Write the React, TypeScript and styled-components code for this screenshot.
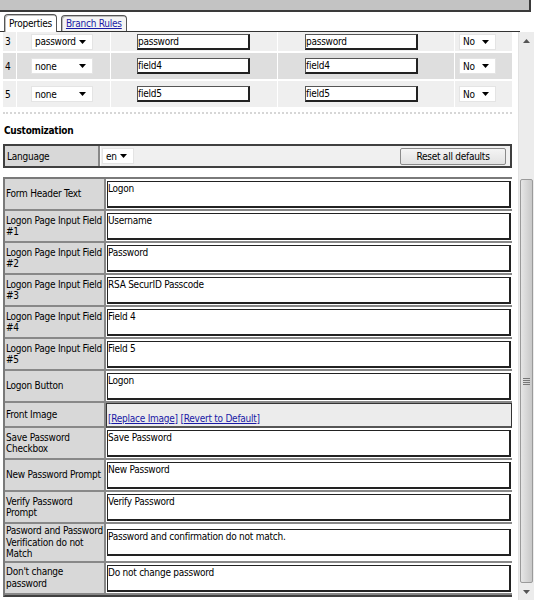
import styled, { createGlobalStyle } from 'styled-components'

const GlobalStyle = createGlobalStyle`
  html, body {
    margin: 0;
    padding: 0;
    background: #ffffff;
  }
  body {
    font-family: "DejaVu Sans Condensed", "DejaVu Sans", sans-serif;
    font-stretch: condensed;
    font-size: 10px;
    letter-spacing: -0.25px;
    color: #000;
    width: 534px;
    height: 600px;
    overflow: hidden;
  }
`

type FieldRow = { num: number; type: string; name: string; label: string; bg: 'light' | 'dark'; clipped?: boolean }

const fieldRows: FieldRow[] = [
  { num: 3, type: 'password', name: 'password', label: 'password', bg: 'light', clipped: true },
  { num: 4, type: 'none', name: 'field4', label: 'field4', bg: 'dark' },
  { num: 5, type: 'none', name: 'field5', label: 'field5', bg: 'light' },
]

type CustomRow = { label: string; value?: string; image?: boolean }

// line breaks follow the narrow label column of the original form
const customRows: CustomRow[] = [
  { label: 'Form Header Text', value: 'Logon' },
  { label: 'Logon Page Input Field\n#1', value: 'Username' },
  { label: 'Logon Page Input Field\n#2', value: 'Password' },
  { label: 'Logon Page Input Field\n#3', value: 'RSA SecurID Passcode' },
  { label: 'Logon Page Input Field\n#4', value: 'Field 4' },
  { label: 'Logon Page Input Field\n#5', value: 'Field 5' },
  { label: 'Logon Button', value: 'Logon' },
  { label: 'Front Image', image: true },
  { label: 'Save Password\nCheckbox', value: 'Save Password' },
  { label: 'New Password Prompt', value: 'New Password' },
  { label: 'Verify Password\nPrompt', value: 'Verify Password' },
  { label: 'Pasword and Password\nVerification do not\nMatch', value: 'Password and confirmation do not match.' },
  { label: "Don't change\npassword", value: 'Do not change password' },
]

function Caret({ up }: { up?: boolean }) {
  return (
    <svg width="7" height="4" viewBox="0 0 7 4">
      <path d={up ? 'M0 4h7L3.5 0z' : 'M0 0h7L3.5 4z'} fill={up ? '#555' : '#000'} />
    </svg>
  )
}

function Dropdown({ value, width }: { value: string; width: number }) {
  return (
    <SelectBox $width={width}>
      <span>{value}</span>
      <Caret />
    </SelectBox>
  )
}

export default function App() {
  return (
    <>
      <GlobalStyle />
      <Page>
        <TopBar />
        <TabStrip>
          <Tab $active>Properties</Tab>
          <Tab>
            <TabLink href="#">Branch Rules</TabLink>
          </Tab>
        </TabStrip>
        <Body>
          <Main>
            <FieldList>
              {fieldRows.map((r) => (
                <FieldRowBox key={r.num} $bg={r.bg} $clipped={r.clipped}>
                  <FieldCell $first>{r.num}</FieldCell>
                  <FieldCell $pad={14}>
                    <Dropdown value={r.type} width={62} />
                  </FieldCell>
                  <FieldCell $pad={26}>
                    <TextBox>{r.name}</TextBox>
                  </FieldCell>
                  <FieldCell $pad={27}>
                    <TextBox>{r.label}</TextBox>
                  </FieldCell>
                  <FieldCell $pad={4}>
                    <Dropdown value="No" width={37} />
                  </FieldCell>
                </FieldRowBox>
              ))}
            </FieldList>
            <Dotted />
            <Heading>Customization</Heading>
            <LanguageBox>
              <LangLabel>Language</LangLabel>
              <LangValue>
                <Dropdown value="en" width={32} />
                <ResetButton>Reset all defaults</ResetButton>
              </LangValue>
            </LanguageBox>
            <CustomTable>
              <tbody>
                {customRows.map((r) => (
                  <tr key={r.label}>
                    <LabelTd>{r.label}</LabelTd>
                    {r.image ? (
                      <ImageTd>
                        <Links>
                          [<a href="#">Replace Image</a>] [<a href="#">Revert to Default</a>]
                        </Links>
                      </ImageTd>
                    ) : (
                      <ValueTd>
                        <Area>{r.value}</Area>
                      </ValueTd>
                    )}
                  </tr>
                ))}
              </tbody>
            </CustomTable>
          </Main>
          <Scrollbar>
            <ScrollArrow>
              <Caret up />
            </ScrollArrow>
            <Track>
              <Thumb>
                <Grip>
                  <i />
                  <i />
                  <i />
                  <i />
                </Grip>
              </Thumb>
            </Track>
            <ScrollArrow>
              <svg width="7" height="4" viewBox="0 0 7 4">
                <path d="M0 0h7L3.5 4z" fill="#555" />
              </svg>
            </ScrollArrow>
          </Scrollbar>
        </Body>
      </Page>
    </>
  )
}

const Page = styled.div`
  width: 534px;
  height: 600px;
  display: flex;
  flex-direction: column;
`

const TopBar = styled.div`
  height: 10px;
  width: 529px;
  flex: none;
  background: #c3c3c3;
  border-bottom: 2px solid #3a3a3a;
  border-right: 2px solid #3a3a3a;
`

const TabStrip = styled.div`
  display: flex;
  align-items: flex-end;
  gap: 4px;
  flex: none;
  height: 20px;
  width: 520px;
  padding-left: 4px;
  border-bottom: 1px solid #333;
  box-sizing: border-box;
`

const Tab = styled.div<{ $active?: boolean }>`
  padding: 0 4px;
  display: flex;
  align-items: center;
  border: 1px solid #555;
  border-bottom: none;
  border-radius: 4px 4px 0 0;
  background: ${({ $active }) => ($active ? '#fff' : '#f4f4f4')};
  margin-bottom: ${({ $active }) => ($active ? '-1px' : '0')};
  height: ${({ $active }) => ($active ? '17px' : '15px')};
  box-shadow: inset 1px 1px 0 #bbb;
`

const TabLink = styled.a`
  color: #1a1aa6;
  text-decoration: underline;
`

const Body = styled.div`
  flex: 1;
  display: flex;
  min-height: 0;
`

const Main = styled.div`
  width: 520px;
  padding-left: 3px;
  box-sizing: border-box;
  overflow: hidden;
`

const FieldList = styled.div`
  display: flex;
  flex-direction: column;
  gap: 2px;
  width: 509px;
`

const FieldRowBox = styled.div<{ $bg: 'light' | 'dark'; $clipped?: boolean }>`
  display: grid;
  grid-template-columns: 13px 94px 167px 177px 1fr;
  height: ${({ $clipped }) => ($clipped ? '19px' : '26px')};
  background: ${({ $bg }) => ($bg === 'dark' ? '#dedede' : '#efefef')};
`

const FieldCell = styled.div<{ $first?: boolean; $pad?: number }>`
  display: flex;
  align-items: center;
  padding-left: ${({ $first, $pad }) => ($first ? 2 : $pad ?? 0)}px;
  border-left: ${({ $first }) => ($first ? 'none' : '1px solid #fff')};
`

const SelectBox = styled.div<{ $width: number }>`
  display: inline-flex;
  align-items: center;
  justify-content: space-between;
  box-sizing: border-box;
  width: ${({ $width }) => $width}px;
  height: 16px;
  padding: 0 6px 0 3px;
  background: #fff;
  border: 1px solid #e4e4e4;
`

const TextBox = styled.div`
  width: 113px;
  height: 16px;
  box-sizing: border-box;
  line-height: 13px;
  background: #fff;
  border-top: 1px solid #555;
  border-left: 1px solid #555;
  border-right: 2px solid #222;
  border-bottom: 2px solid #222;
`

const Dotted = styled.div`
  width: 509px;
  margin-top: 5px;
  border-top: 2px dotted #d6d6d6;
`

const Heading = styled.div`
  font-weight: bold;
  margin: 11px 0 0 1px;
  height: 19px;
`

const LanguageBox = styled.div`
  display: flex;
  width: 509px;
  height: 24px;
  box-sizing: border-box;
  border: 2px solid #404040;
  background: #fff;
`

const LangLabel = styled.div`
  width: 95px;
  padding-left: 2px;
  box-sizing: border-box;
  display: flex;
  align-items: center;
  background: #d8d8d8;
  border-right: 2px solid #888;
`

const LangValue = styled.div`
  flex: 1;
  display: flex;
  align-items: center;
  justify-content: space-between;
  padding: 0 4px 0 1px;
  margin-left: 1px;
  background: #f0f0f0;
`

const ResetButton = styled.button`
  font: inherit;
  letter-spacing: inherit;
  height: 17px;
  width: 106px;
  padding: 0;
  border: 1px solid #8a8a8a;
  border-radius: 2px;
  background: linear-gradient(#f4f4f4, #e2e2e2);
  color: #000;
`

const CustomTable = styled.table`
  width: 509px;
  margin-top: 9px;
  table-layout: fixed;
  border-collapse: separate;
  border-spacing: 0;
  border-top: 2px solid #7a7a7a;
  border-left: 2px solid #7a7a7a;
  border-bottom: 2px solid #404040;
`

const LabelTd = styled.td`
  width: 98px;
  padding: 1px 0 1px 1px;
  vertical-align: middle;
  line-height: 11.5px;
  white-space: pre-line;
  background: #d8d8d8;
  border-bottom: 2px solid #888;
  border-right: 2px solid #888;
`

const ValueTd = styled.td`
  padding: 2px 1px 1px 1px;
  vertical-align: middle;
  border-bottom: 2px solid #888;
  background: #fff;
`

const Area = styled.div`
  height: 27px;
  box-sizing: border-box;
  padding: 1px 0;
  line-height: 12px;
  background: #fff;
  border: 1px solid #222;
  border-right-width: 2px;
  border-bottom-width: 2px;
`

const ImageTd = styled.td`
  height: 21px;
  vertical-align: bottom;
  padding: 0 1px 1px;
  background: #ececec;
  border: 1px solid #333;
  border-bottom: 2px solid #555;
`

const Links = styled.div`
  padding-bottom: 1px;
  color: #1a1aa6;

  a {
    color: #1a1aa6;
    text-decoration: underline;
  }
`

const Scrollbar = styled.div`
  width: 15px;
  display: flex;
  flex-direction: column;
  background: #ececec;
  border-left: 1px solid #e2e2e2;
`

const ScrollArrow = styled.div`
  height: 17px;
  flex: none;
  display: flex;
  align-items: center;
  justify-content: center;
`

const Track = styled.div`
  flex: 1;
  display: flex;
  flex-direction: column;
  justify-content: flex-end;
`

const Thumb = styled.div`
  height: 404px;
  margin: 0 1px;
  box-sizing: border-box;
  border: 1px solid #9a9a9a;
  border-radius: 2px;
  background: linear-gradient(90deg, #e6e6e6, #d4d4d4 60%, #c8c8c8);
  display: flex;
  align-items: center;
  justify-content: center;
`

const Grip = styled.div`
  display: flex;
  flex-direction: column;
  gap: 1px;

  i {
    display: block;
    width: 7px;
    height: 1px;
    background: #777;
  }
`
